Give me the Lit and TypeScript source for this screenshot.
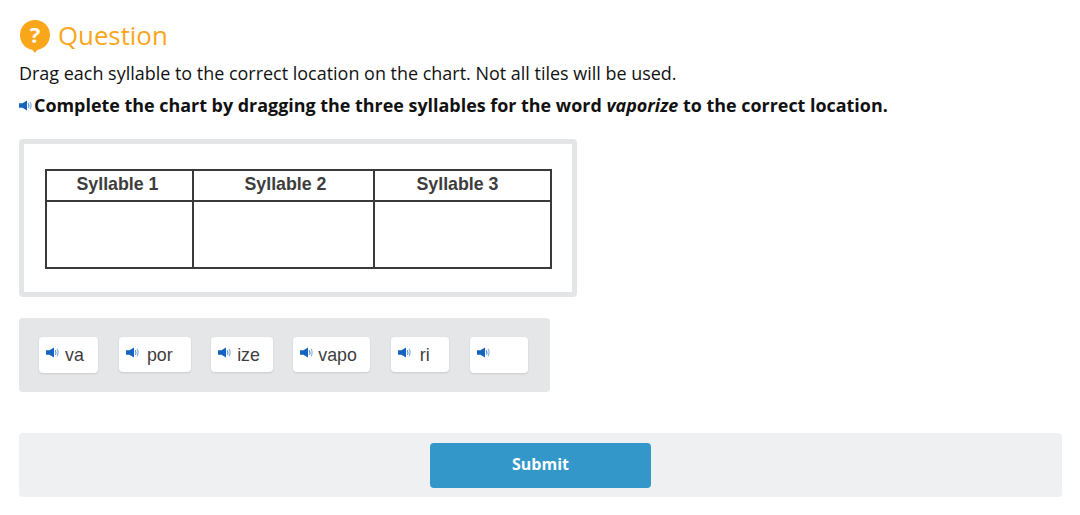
import { LitElement, html, css, svg } from "lit";
import { customElement } from "lit/decorators.js";

const speaker = html`<svg class="spk" viewBox="0 0 14 11" width="14" height="11" aria-hidden="true">
  <path d="M0 3.2H3.4L8 .4V10.6L3.4 7.8H0Z" fill="#1565c0"></path>
  ${svg`<path d="M9.3 3.2Q10.5 5.5 9.3 7.8" fill="none" stroke="#5e97d8" stroke-width="1.2"></path>
  <path d="M11 1.8Q13.2 5.5 11 9.2" fill="none" stroke="#8db6e6" stroke-width="1.2"></path>`}
</svg>`;

const tiles = [
  { t: "va", w: 59.4, h: 36, gap: 5 },
  { t: "por", w: 71.6, h: 35, gap: 7 },
  { t: "ize", w: 61.5, h: 35, gap: 5 },
  { t: "vapo", w: 77, h: 35, gap: 4 },
  { t: "ri", w: 58.6, h: 35, gap: 8 },
  { t: "", w: 58.4, h: 36, gap: 0 },
];

@customElement("app-root")
export class AppRoot extends LitElement {
  static styles = css`
    :host {
      display: block;
      width: 1080px;
      height: 515px;
      box-sizing: border-box;
      padding: 18px 18px 0 19px;
      background: #fff;
      font-family: "Open Sans", sans-serif;
      color: #111;
      overflow: hidden;
    }
    .head {
      display: flex;
      align-items: center;
      gap: 7px;
      height: 34px;
      color: #faa61a;
      font-size: 25.8px;
      line-height: 34px;
    }
    .q { display: block; margin-top: 1px; }
    .q text { font-family: "Open Sans", sans-serif; font-weight: 700; font-size: 22px; fill: #fff; }
    .intro {
      margin: 9px 0 0;
      font-size: 17.97px;
      line-height: 24px;
      height: 24px;
    }
    .prompt {
      display: flex;
      align-items: center;
      margin: 8px 0 0;
      font-size: 17.92px;
      font-weight: 700;
      line-height: 24px;
      height: 24px;
      white-space: pre;
    }
    .prompt .spk { margin-right: 1px; }
    .chart {
      box-sizing: border-box;
      width: 558px;
      height: 158px;
      margin-top: 22px;
      border: 5px solid #e4e5e6;
      border-radius: 4px;
      padding: 25px 0 0 21px;
    }
    table {
      border-collapse: collapse;
      width: 505px;
      height: 100px;
      table-layout: fixed;
      font-family: "Liberation Sans", Arial, sans-serif;
    }
    th, td { border: 2px solid #3a3a3a; padding: 0; }
    th {
      box-sizing: border-box;
      height: 31px;
      padding-bottom: 2px;
      font-size: 17.8px;
      font-weight: 700;
      color: #3d3d3d;
    }
    th.c1 { padding-right: 4px; }
    th.c2 { padding-left: 4px; }
    th.c3 { padding-right: 10px; }
    .bank {
      box-sizing: border-box;
      display: flex;
      align-items: flex-start;
      gap: 20.6px;
      width: 530.5px;
      height: 74px;
      margin-top: 21px;
      padding: 19px 20px 0;
      background: #e4e6e8;
      border-radius: 4px;
    }
    .tile {
      box-sizing: border-box;
      display: flex;
      align-items: flex-start;
      padding: 8px 0 0 7px;
      background: #fff;
      border-radius: 4px;
      box-shadow: 0 1px 2px rgba(0, 0, 0, 0.12);
      font-family: "Liberation Sans", Arial, sans-serif;
      font-size: 17.8px;
      line-height: 20px;
      color: #3d3d3d;
    }
    .tile .spk { margin-top: 2px; flex: none; }
    .tile span { display: block; }
    .foot {
      box-sizing: border-box;
      display: flex;
      justify-content: center;
      align-items: flex-start;
      width: 1043px;
      height: 64px;
      margin-top: 41px;
      padding-top: 10px;
      background: #eff0f2;
      border-radius: 4px;
    }
    button {
      width: 221px;
      height: 45px;
      border: 0;
      border-radius: 4px;
      background: #3397c9;
      color: #fff;
      font-family: "Open Sans", sans-serif;
      font-size: 16px;
      font-weight: 700;
      padding: 0 0 4px;
    }
  `;

  render() {
    return html`
      <div class="head">
        <svg class="q" width="32" height="34" viewBox="0 0 32 34" aria-hidden="true">
          <path d="M16 1C24.4 1 31 7.6 31 16C31 23.6 25.6 29.7 18.4 30.8L15.8 34L13.4 30.8C6.2 29.7 1 23.6 1 16C1 7.6 7.6 1 16 1Z" fill="#faa61a"></path>
          <text x="16" y="23.5" text-anchor="middle">?</text>
        </svg>
        <span>Question</span>
      </div>
      <p class="intro">Drag each syllable to the correct location on the chart. Not all tiles will be used.</p>
      <p class="prompt">${speaker}<span>Complete the chart by dragging the three syllables for the word <em>vaporize</em> to the correct location.</span></p>
      <div class="chart">
        <table>
          <colgroup><col style="width:147px" /><col style="width:181px" /><col style="width:177px" /></colgroup>
          <tr><th class="c1">Syllable 1</th><th class="c2">Syllable 2</th><th class="c3">Syllable 3</th></tr>
          <tr><td></td><td></td><td></td></tr>
        </table>
      </div>
      <div class="bank">
        ${tiles.map(
          (t) => html`<div class="tile" style="width:${t.w}px;height:${t.h}px">
            ${speaker}<span style="margin-left:${t.gap}px">${t.t}</span>
          </div>`
        )}
      </div>
      <div class="foot"><button>Submit</button></div>
    `;
  }
}
